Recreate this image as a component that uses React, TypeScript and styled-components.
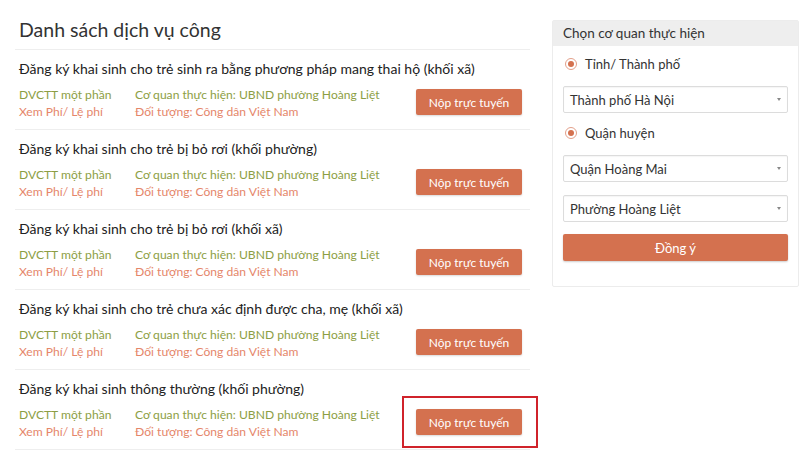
import React from 'react';
import styled, { createGlobalStyle } from 'styled-components';

const GlobalStyle = createGlobalStyle`
  html, body {
    margin: 0;
    padding: 0;
    background: #ffffff;
    font-family: Lato, "Open Sans", sans-serif;
    color: #333;
  }
  * { box-sizing: border-box; }
`;

const Page = styled.div`
  display: flex;
  align-items: flex-start;
  gap: 22px;
  padding: 16px 0 0 15px;
  width: 799px;
  height: 456px;
  overflow: hidden;
`;

const Main = styled.div`
  width: 515px;
  flex-shrink: 0;
`;

const Heading = styled.h2`
  margin: 0;
  padding: 0 0 5px 4px;
  font-size: 19.5px;
  font-weight: 400;
  line-height: 28px;
  color: #333;
  border-bottom: 1px solid #eeeeee;
`;

const Item = styled.div`
  padding: 9px 0 9px 4px;
  border-bottom: 1px solid #eeeeee;
`;

const ItemTitle = styled.div`
  font-size: 14px;
  line-height: 20px;
  color: #222;
  margin-bottom: 7px;
`;

const ItemBody = styled.div`
  display: flex;
  align-items: center;
`;

const MetaCol = styled.div<{ width: number }>`
  width: ${p => p.width}px;
  display: flex;
  flex-direction: column;
  font-size: 12.1px;
  line-height: 17px;
`;

const Meta = styled.span<{ tone: 'green' | 'orange' }>`
  color: ${p => (p.tone === 'green' ? '#8c9e44' : '#e5866a')};
  white-space: nowrap;
`;

const ButtonFrame = styled.div<{ highlighted: boolean }>`
  position: relative;
  margin-left: auto;
  margin-right: 8px;
  margin-top: -2px;
  &::after {
    content: '';
    display: ${p => (p.highlighted ? 'block' : 'none')};
    position: absolute;
    left: -14px;
    right: -16px;
    top: -13px;
    bottom: -13px;
    border: 2px solid #d0232b;
  }
`;

const SubmitButton = styled.button`
  display: block;
  height: 26px;
  width: 106px;
  border: none;
  border-radius: 2px;
  background: #d4714f;
  color: #fff;
  font-family: inherit;
  font-size: 12px;
  padding: 0;
  box-shadow: 0 1px 2px rgba(0, 0, 0, 0.15);
  cursor: pointer;
`;

const Sidebar = styled.div`
  width: 247px;
  margin-top: 4px;
  border: 1px solid #ececec;
  border-radius: 2px;
`;

const SidebarHeader = styled.div`
  background: #eeeeee;
  padding: 0 10px;
  height: 25px;
  line-height: 25px;
  font-size: 13.5px;
  color: #333;
`;

const SidebarBody = styled.div`
  padding: 8px 10px 25px 10px;
  display: flex;
  flex-direction: column;
`;

const RadioRow = styled.label<{ gapTop: number }>`
  display: flex;
  align-items: center;
  gap: 8px;
  margin-top: ${p => p.gapTop}px;
  height: 20px;
  font-size: 13px;
  color: #333;
  padding-left: 2px;
`;

const RadioDot = styled.span`
  width: 12px;
  height: 12px;
  border-radius: 50%;
  border: 1px solid #e3a08a;
  background: #fff;
  display: flex;
  align-items: center;
  justify-content: center;
  &::after {
    content: '';
    width: 6px;
    height: 6px;
    border-radius: 50%;
    background: #d4714f;
  }
`;

const Select = styled.div<{ gapTop: number }>`
  margin-top: ${p => p.gapTop}px;
  height: 27px;
  border: 1px solid #dcdcdc;
  border-radius: 2px;
  display: flex;
  align-items: center;
  justify-content: space-between;
  padding: 0 6px 0 6px;
  font-size: 13px;
  color: #333;
  box-shadow: inset 0 1px 1px rgba(0, 0, 0, 0.04);
`;

const Caret = styled.span`
  width: 0;
  height: 0;
  border-left: 2.5px solid transparent;
  border-right: 2.5px solid transparent;
  border-top: 3px solid #888;
`;

const AgreeButton = styled.button`
  margin-top: 12px;
  height: 27px;
  border: none;
  border-radius: 2px;
  background: #d4714f;
  color: #fff;
  font-family: inherit;
  font-size: 13px;
  box-shadow: 0 1px 2px rgba(0, 0, 0, 0.2);
  cursor: pointer;
`;

const services = [
  'Đăng ký khai sinh cho trẻ sinh ra bằng phương pháp mang thai hộ (khối xã)',
  'Đăng ký khai sinh cho trẻ bị bỏ rơi (khối phường)',
  'Đăng ký khai sinh cho trẻ bị bỏ rơi (khối xã)',
  'Đăng ký khai sinh cho trẻ chưa xác định được cha, mẹ (khối xã)',
  'Đăng ký khai sinh thông thường (khối phường)',
];

const App: React.FC = () => (
  <>
    <GlobalStyle />
    <Page>
      <Main>
        <Heading>Danh sách dịch vụ công</Heading>
        {services.map((title, i) => (
          <Item key={title}>
            <ItemTitle>{title}</ItemTitle>
            <ItemBody>
              <MetaCol width={116}>
                <Meta tone="green">DVCTT một phần</Meta>
                <Meta tone="orange">Xem Phí/ Lệ phí</Meta>
              </MetaCol>
              <MetaCol width={260}>
                <Meta tone="green">Cơ quan thực hiện: UBND phường Hoàng Liệt</Meta>
                <Meta tone="orange">Đối tượng: Công dân Việt Nam</Meta>
              </MetaCol>
              <ButtonFrame highlighted={i === services.length - 1}>
                <SubmitButton>Nộp trực tuyến</SubmitButton>
              </ButtonFrame>
            </ItemBody>
          </Item>
        ))}
      </Main>
      <Sidebar>
        <SidebarHeader>Chọn cơ quan thực hiện</SidebarHeader>
        <SidebarBody>
          <RadioRow gapTop={0}>
            <RadioDot />
            Tỉnh/ Thành phố
          </RadioRow>
          <Select gapTop={12}>
            Thành phố Hà Nội
            <Caret />
          </Select>
          <RadioRow gapTop={10}>
            <RadioDot />
            Quận huyện
          </RadioRow>
          <Select gapTop={12}>
            Quận Hoàng Mai
            <Caret />
          </Select>
          <Select gapTop={13}>
            Phường Hoàng Liệt
            <Caret />
          </Select>
          <AgreeButton>Đồng ý</AgreeButton>
        </SidebarBody>
      </Sidebar>
    </Page>
  </>
);

export default App;
